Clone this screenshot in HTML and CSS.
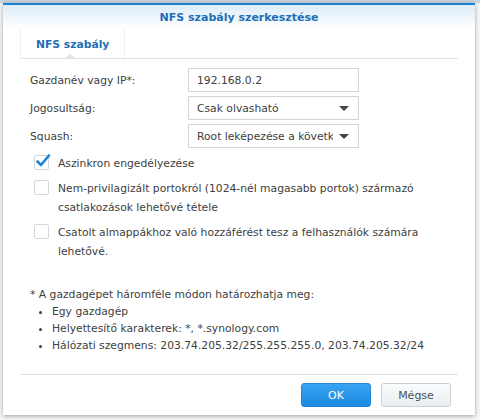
FILE: index.html
```html
<!doctype html>
<html lang="hu">
  <head>
    <meta charset="UTF-8" />
    <title>NFS szabály szerkesztése</title>
    <link rel="stylesheet" href="styles.css">
  </head>
  <body>
    <div class="backdrop">
      <div class="dialog">
        <div class="dialog-header">NFS szabály szerkesztése</div>
        <div class="tabs">
          <div class="tab active">NFS szabály</div>
        </div>
        <div class="dialog-body">
          <div class="form-row">
            <label for="host">Gazdanév vagy IP*:</label>
            <input type="text" id="host" class="field" value="192.168.0.2" />
          </div>
          <div class="form-row">
            <label>Jogosultság:</label>
            <div class="field combo">
              <span class="combo-text">Csak olvasható</span>
              <span class="arrow"></span>
            </div>
          </div>
          <div class="form-row">
            <label>Squash:</label>
            <div class="field combo">
              <span class="combo-text">Root leképezése a követk</span>
              <span class="arrow"></span>
            </div>
          </div>

          <div class="check-row">
            <span class="checkbox checked">
              <svg width="16" height="16" viewBox="0 0 16 16">
                <path d="M2.5 8.5 L6 12 L14 2.5" fill="none" stroke="#1c84d6" stroke-width="2.6" stroke-linecap="round" stroke-linejoin="round" />
              </svg>
            </span>
            <span class="check-label">Aszinkron engedélyezése</span>
          </div>
          <div class="check-row">
            <span class="checkbox"></span>
            <span class="check-label">Nem-privilagizált portokról (1024-nél magasabb portok) származó csatlakozások lehetővé tétele</span>
          </div>
          <div class="check-row">
            <span class="checkbox"></span>
            <span class="check-label">Csatolt almappákhoz való hozzáférést tesz a felhasználók számára lehetővé.</span>
          </div>

          <div class="note">
            <p>* A gazdagépet háromféle módon határozhatja meg:</p>
            <ul>
              <li>Egy gazdagép</li>
              <li>Helyettesítő karakterek: *, *.synology.com</li>
              <li>Hálózati szegmens: 203.74.205.32/255.255.255.0, 203.74.205.32/24</li>
            </ul>
          </div>
        </div>
        <div class="dialog-footer">
          <button class="btn btn-primary">OK</button>
          <button class="btn">Mégse</button>
        </div>
      </div>
    </div>
  </body>
</html>
```

FILE: styles.css
```css
body {
  margin: 0;
  font-family: "DejaVu Sans", Verdana, sans-serif;
  font-size: 10.75px;
  color: #404040;
  background-color: #f2f4f6;
}

.backdrop {
  height: 420px;
  padding: 3px 5px 0 3px;
  box-sizing: border-box;
  background: linear-gradient(#c9d3dc 0, #c9d3dc 3px, #f4f6f8 3px);
}

.dialog {
  height: 412px;
  box-sizing: border-box;
  display: flex;
  flex-direction: column;
  background-color: #fff;
  border-top: 2px solid #1f7fcb;
  box-shadow: 0 1px 4px rgba(0, 0, 0, 0.35);
}

.dialog-header {
  height: 24px;
  line-height: 26px;
  text-align: center;
  font-weight: bold;
  font-size: 11px;
  color: #1f6fb5;
  background: linear-gradient(#dcecf9, #fff);
}

.tabs {
  display: flex;
  margin: 0 17px;
  height: 29px;
  border-bottom: 1px solid #dde2e6;
}

.tab {
  padding: 0 15px;
  line-height: 31px;
  font-weight: bold;
  font-size: 10.75px;
  color: #1f6fb5;
  border-left: 1px solid #eceff1;
  border-right: 1px solid #eceff1;
  position: relative;
}

.tab.active::after {
  content: "";
  position: absolute;
  left: 43px;
  bottom: -1px;
  border-left: 6px solid transparent;
  border-right: 6px solid transparent;
  border-bottom: 5px solid #dde2e6;
}

.dialog-body {
  flex: 1;
  padding: 9px 27px 0 27px;
}

.form-row {
  display: flex;
  align-items: center;
  margin-bottom: 4px;
}

.form-row label {
  width: 158px;
}

.field {
  width: 171px;
  height: 24px;
  box-sizing: border-box;
  border: 1px solid #cfd6dc;
  padding: 0 8px;
  font-family: inherit;
  font-size: 10.75px;
  color: #404040;
  outline: none;
}

.combo {
  display: flex;
  align-items: center;
  gap: 6px;
}

.combo-text {
  flex: 1;
  white-space: nowrap;
  overflow: hidden;
}

.arrow {
  border-left: 5px solid transparent;
  border-right: 5px solid transparent;
  border-top: 5px solid #444;
  margin-right: 1px;
}

.check-row {
  display: flex;
  align-items: flex-start;
  margin-top: 6px;
  line-height: 19px;
}

.check-row:first-of-type {
  margin-top: 3px;
}

.checkbox {
  width: 15px;
  height: 15px;
  margin: 1px 9px 0 4px;
  flex-shrink: 0;
  box-sizing: border-box;
  border: 1px solid #d3d8dd;
  border-radius: 2px;
  background-color: #fff;
  position: relative;
}

.checkbox svg {
  position: absolute;
  left: 0;
  top: -3px;
}

.check-label {
  flex: 1;
}

.note {
  margin-top: 25px;
  line-height: 17px;
}

.note p {
  margin: 0;
}

.note ul {
  margin: 0;
  padding-left: 22px;
}

.dialog-footer {
  margin: 0 17px;
  border-top: 1px solid #dde2e6;
  height: 40px;
  display: flex;
  align-items: center;
  justify-content: flex-end;
  gap: 10px;
  padding-right: 7px;
}

.btn {
  width: 70px;
  height: 24px;
  border: 1px solid #c8d0d8;
  border-radius: 3px;
  background: linear-gradient(#fafcfd, #e9eef2);
  font-family: inherit;
  font-size: 11px;
  color: #4a5058;
  cursor: pointer;
}

.btn-primary {
  border-color: #1f86d9;
  background: linear-gradient(#3aa3f2, #1d8ae0);
  color: #fff;
}
```
